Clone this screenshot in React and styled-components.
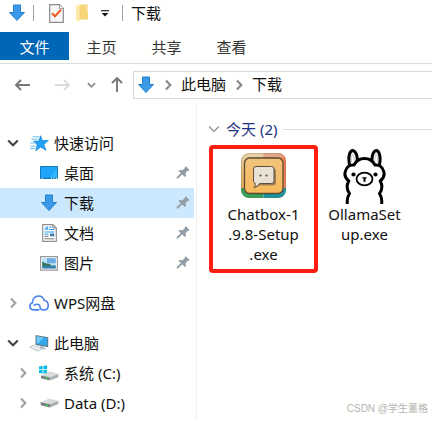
import React, { useState } from 'react';
import styled, { createGlobalStyle } from 'styled-components';

const GlobalStyle = createGlobalStyle`
    * {
        box-sizing: border-box;
    }

    body {
        margin: 0;
        background: #fffffd;
        color: #111;
        font-family: "Noto Sans", "Noto Sans CJK SC", sans-serif;
        font-size: 15px;
        line-height: 20px;
        overflow: hidden;
    }

    button {
        border: 0;
        padding: 0;
        background: none;
        color: inherit;
        font: inherit;
        cursor: pointer;
    }

    svg {
        display: block;
        flex: none;
    }
`;

const Window = styled.div`
    display: flex;
    flex-direction: column;
    min-height: 100vh;
    position: relative;
`;

const TitleBar = styled.header`
    display: flex;
    align-items: center;
    height: 26px;
    margin-bottom: 6px;
    padding-left: 8px;
`;

const QuickTools = styled.div`
    display: flex;
    align-items: center;
    gap: 12px;
    margin: 0 13px 0 15px;
`;

const Separator = styled.span`
    width: 1px;
    height: 16px;
    background: #a0a0a0;
`;

const ToolIcon = styled.span`
    display: flex;
    margin-right: ${props => props.$gap}px;
`;

const WindowTitle = styled.h1`
    margin: 0 0 0 8px;
    font-size: 15px;
    font-weight: 400;
`;

const Ribbon = styled.nav`
    display: flex;
    height: 32px;
    padding-bottom: 4px;
    border-bottom: 1px solid #dadada;
`;

const RibbonTab = styled.button`
    width: ${props => props.$primary ? '69px' : '65px'};
    height: 28px;
    padding-top: 1px;
    background: ${props => props.$primary ? '#0067b8' : 'transparent'};
    color: ${props => props.$primary ? '#fff' : '#333'};
`;

const NavBar = styled.div`
    display: flex;
    align-items: center;
    padding: 7px 0 6px 14px;
`;

const NavButton = styled.button`
    display: flex;
    justify-content: center;
    width: 18px;
    margin-right: ${props => props.$gap}px;
`;

const AddressBar = styled.div`
    display: flex;
    align-items: center;
    flex: 1;
    height: 28px;
    padding-left: 3px;
    border: 1px solid #d9d9d9;
    border-right: 0;
`;

const Crumb = styled.a`
    padding: 0 10px 2px 9px;
    color: inherit;
    text-decoration: none;
`;

const Body = styled.div`
    display: flex;
    flex: 1;
`;

const Sidebar = styled.aside`
    width: 197px;
    padding: 23px 2px 0 0;
    border-right: 1px solid #f0f0f0;
`;

const TreeGroup = styled.div`
    & + & {
        margin-top: 10px;
    }
`;

const TreeRow = styled.button`
    display: flex;
    align-items: center;
    width: 100%;
    height: 30px;
    padding-left: ${props => props.$child ? '16px' : '6px'};
    padding-right: 4px;
    background: ${props => props.$selected ? '#cce8ff' : 'transparent'};
    text-align: left;
`;

const ExpandSlot = styled.span`
    display: flex;
    justify-content: center;
    width: 14px;
`;

const IconSlot = styled.span`
    display: flex;
    justify-content: center;
    width: 20px;
    margin: 0 5px 0 9px;
`;

const TreeLabel = styled.span`
    flex: 1;
    padding-bottom: 1px;
`;

const FileArea = styled.main`
    flex: 1;
    min-width: 0;
    padding: 14px 0 0 11px;
`;

const GroupHeader = styled.h2`
    display: flex;
    align-items: center;
    gap: 6px;
    margin: 0 0 6px;
    color: #1e3287;
    font-size: 15px;
    font-weight: 400;
    white-space: nowrap;

    &::after {
        content: '';
        flex: 1;
        height: 1px;
        background: #dedede;
    }
`;

const FileGrid = styled.div`
    display: flex;
    align-items: flex-start;
    padding-left: 1px;
`;

const FileTile = styled.button`
    display: flex;
    flex-direction: column;
    align-items: center;
    width: ${props => props.$marked ? '109px' : '93px'};
    padding-bottom: 5px;
    border: ${props => props.$marked ? '4px solid #ff1d12' : '0'};
    border-top: 4px solid ${props => props.$marked ? '#ff1d12' : 'transparent'};
    border-radius: 4px;
`;

const FileName = styled.span`
    white-space: pre-line;
`;

const Watermark = styled.small`
    position: absolute;
    right: 4px;
    bottom: 5px;
    color: #b4b4b4;
    font-family: "Liberation Sans", "Noto Sans CJK SC", sans-serif;
    font-size: 10px;
    line-height: 14px;
`;

const DownloadIcon = () => (
    <svg width="18" height="18" viewBox="0 0 18 18">
        <path d="M5.5 1h7v7.5h4L9 16.5l-7.5-8h4z" fill="#3c99e7" stroke="#2180d0" />
    </svg>
);

const Chevron = ({ down, color = '#8a8a8a', thin, small }) => (
    <svg
        width={small ? 9 : down ? 12 : 7}
        height={small ? 6 : down ? 8 : 12}
        viewBox={down ? '0 0 12 8' : '0 0 7 12'}
    >
        <path
            d={down ? 'M1.2 1.5 6 6.3l4.8-4.8' : 'M1 1.5 5.3 6 1 10.5'}
            fill="none"
            stroke={color}
            strokeWidth={thin ? 1.2 : 2.2}
        />
    </svg>
);

const CheckPageIcon = () => (
    <svg width="15" height="19" viewBox="0 0 15 19">
        <path d="M.7.7h9.8l3.8 3.8v13.8H.7z" fill="#f7f7f7" stroke="#8b8b8b" strokeWidth="1.2" />
        <path d="M10.5.7v3.8h3.8" fill="#fff" stroke="#999" />
        <path d="m3 9.2 3 3.1 6-6.5" fill="none" stroke="#f05a1a" strokeWidth="2" />
    </svg>
);

const FolderIcon = () => (
    <svg width="13" height="18" viewBox="0 0 13 18">
        <path d="M3 .5h9v15H3z" fill="#f7d67a" />
        <path d="M0 .5 4 2.5V16l-2 1.5-2-1.5z" fill="#ffe9a9" />
        <path d="M4 2.5V16" stroke="#efca6b" strokeWidth=".6" />
        <path d="M10 .5h2v7h-2z" fill="#fae5a6" />
    </svg>
);

const CustomizeIcon = () => (
    <svg width="8" height="7" viewBox="0 0 8 7">
        <path d="M0 .7h8" stroke="#222" strokeWidth="1.2" />
        <path d="M.7 3h6.6L4 6.5z" fill="#111" />
    </svg>
);

const ArrowIcon = ({ color, turn = 0 }) => (
    <svg width="18" height="18" viewBox="0 0 18 18">
        <g transform={`rotate(${turn} 9 9)`} fill="none" stroke={color} strokeWidth="1.9">
            <path d="M16 9H2.5M7 4 2 9l5 5" />
        </g>
    </svg>
);

const StarIcon = () => (
    <svg width="19" height="17" viewBox="0 0 19 17">
        <path d="m10.6.8 1.8 4.8 6-.2-4.6 4 2.2 5.9-5.3-3.2-5 3.6 1.5-5.9-3.6-3.5 5.2-.3z" fill="#20a2f5" stroke="#1283d8" strokeWidth=".7" />
        <path d="M2.5 1.8h6.8M1.4 4.2h6.4M.3 8h4.2M.7 11.1h5M0 13.6h4.8" stroke="#57b9ef" strokeWidth=".9" />
    </svg>
);

const DesktopIcon = () => (
    <svg width="18" height="14" viewBox="0 0 18 14">
        <path d="M.5.5h17v12H.5z" fill="#1da5fa" stroke="#137abc" />
        <path d="m10 12 7-9v9z" fill="#35b5ff" />
        <path d="M1 12.3h16" stroke="#0872b9" />
        <path d="M2 12.3h1M11 12.3h1M13.5 12.3h1M16 12.3h1" stroke="#fff" />
    </svg>
);

const DocumentIcon = () => (
    <svg width="15" height="18" viewBox="0 0 15 18">
        <path d="M.7.7h10.1L14.3 4v13.3H.7z" fill="#fff" stroke="#909090" strokeWidth="1.2" />
        <path d="M10.8.7V4h3.5" fill="none" stroke="#909090" />
        <path d="m2.5 6 2-3h1.2v3M3.5 5h2.2M7.2 3.2h2.3M7.2 5.5h5M2.5 8h9.8M2.5 10.2h4" fill="none" stroke="#279be5" />
        <path d="M8 9.5h4.3v2.8H8z" fill="#397caf" />
        <path d="M2.5 12.3h4M2.5 14.8h9.8" stroke="#777" />
    </svg>
);

const PictureIcon = () => (
    <svg width="18" height="15" viewBox="0 0 18 15">
        <path d="M.6.6h16.8v13.5H.6z" fill="#fff" stroke="#999" strokeWidth="1.2" />
        <path d="M2.2 2.2h13.6v10.3H2.2z" fill="#b9e1fc" />
        <path d="M7 2.2h8.8v5H7z" fill="#6daee2" />
        <path d="m2.2 5.5 4 2 3 .2 2.4 1.8h4.2v1H2.2z" fill="#35765f" />
        <path d="M2.2 10h13.6v2.5H2.2z" fill="#357fae" />
    </svg>
);

const CloudIcon = () => (
    <svg width="20" height="16" viewBox="0 0 20 16">
        <path
            d="M9.8 14.9H4.2C-.1 14.5-.2 9 3.5 7.8 3.2 3.5 6.3 1 9.5 1c2.8 0 5 1.8 5.6 4.3 5.5 1 5.2 8.9.7 9.6-2.6.3-4.8-.4-4.8-2.9 0-1.5-1.1-2.8-3-2.8-1.1 0-2 .4-2.7 1"
            fill="none"
            stroke="#4b82ed"
            strokeWidth="1.6"
            strokeLinecap="round"
        />
    </svg>
);

const ComputerIcon = () => (
    <svg width="20" height="18" viewBox="0 0 20 18">
        <path d="m6.5 1 12.7 2.2v10L6.5 11z" fill="#647989" />
        <path d="m7.5 2.2 10.7 1.9v7.7L7.5 9.9z" fill="#35a9ed" />
        <path d="m7.5 2.2 7 1.2L8 10z" fill="#75c9f7" />
        <path d="m11.5 12 3 .5v1.2l3 .8-2 1-5-1.5z" fill="#a9b4bb" />
        <path d="m.5 13.2 4-2 9 3.6-4.7 2.5z" fill="#d8dfe3" stroke="#adb8bf" strokeWidth=".6" />
        <path d="m3 13 6.5 2.7M5 12.2l6 2.7" stroke="#fff" strokeWidth=".7" />
    </svg>
);

const SystemDriveIcon = () => (
    <svg width="20" height="16" viewBox="0 0 20 16">
        <path d="M0 1.5 3.6 1v3.3H0zM4.4.9 8 .3v4H4.4zM0 5.1h3.6v3.3L0 7.9zM4.4 5.1H8V9l-3.6-.5z" fill="#08bce9" />
        <path d="m2 10.5 8.5-4.3L19.3 9l-8.6 3.3z" fill="#d8dcdd" />
        <path d="m2 10.5 8.7 1.8v3.2L2 13.2z" fill="#777d80" />
        <path d="M10.7 12.3 19.3 9v3.3l-8.6 3.2z" fill="#a9aeb0" />
        <path d="m6.5 12.8 2.3.6" stroke="#32d442" strokeWidth="1.4" />
    </svg>
);

const DriveIcon = () => (
    <svg width="19" height="10" viewBox="0 0 19 10">
        <path d="M.7 4.2 9.2.6l9.2 2.2L10 6.2z" fill="#d8dcdd" />
        <path d="M.7 4.2 10 6.2v3.2L.7 7.2z" fill="#777d80" />
        <path d="m10 6.2 8.4-3.4v3.3L10 9.4z" fill="#a9aeb0" />
        <path d="m6 6.9 2.3.6" stroke="#32d442" strokeWidth="1.4" />
    </svg>
);

const PinIcon = () => (
    <svg width="14" height="14" viewBox="0 0 14 14">
        <path d="m8.8 1 1-.8 3.7 3.7-1 1-.8-.1-2.2 2.4.5 2.7-1 1-2.8-2.4L2 12.4H.7V11L4.8 7.3 2.5 4.8l1-.9 2.9.3 2.5-2.3z" fill="#929da5" />
    </svg>
);

const ChatboxIcon = () => (
    <svg width="46" height="55" viewBox="0 -1 46 55">
        <defs>
            <clipPath id="chatboxFrame">
                <rect x="0" y="3" width="45" height="45" rx="8" />
            </clipPath>
            <linearGradient id="chatboxTop" x2="0" y2="1">
                <stop stopColor="#e4d3aa" />
                <stop offset="1" stopColor="#e9aa50" />
            </linearGradient>
            <linearGradient id="chatboxFace" x2="0" y2="1">
                <stop stopColor="#f0c47d" />
                <stop offset="1" stopColor="#f9b95c" />
            </linearGradient>
        </defs>
        <g clipPath="url(#chatboxFrame)">
            <path d="M0 3h22.5v35H0z" fill="url(#chatboxTop)" />
            <path d="M22.5 3H45v35H22.5z" fill="#f08156" />
            <path d="M22.5 3H45v4H22.5z" fill="#e2a689" />
            <path d="M0 38h22.5v11H0z" fill="#35a25b" />
            <path d="M22.5 38H45v11H22.5z" fill="#1994a0" />
        </g>
        <rect x=".5" y="3.5" width="44" height="44" rx="8" fill="none" stroke="#7e674f" strokeOpacity=".3" />
        <rect x="3.5" y="8" width="38.5" height="35.5" rx="5" fill="url(#chatboxFace)" stroke="#5d492f" strokeWidth="1.3" />
        <path d="M16 18.5h16q3 0 3 3v11q0 3-4 3H19l-6 3 2-4q-2-1-2-3V21.5q0-3 3-3" fill="#665542" opacity=".6" />
        <path d="M15 16.5h15.5q2.5 0 2.5 2.5v12q0 2.5-2.5 2.5H18.5c-1 2-3 3.4-5.6 3.8 1.2-1 1.7-2.4 1.3-4-1.2-.4-1.7-1-1.7-2.3V19q0-2.5 2.5-2.5z" fill="#e9e1d3" stroke="#5d5042" />
        <circle cx="19.5" cy="25.5" r="1.1" fill="#574b40" />
        <circle cx="25.5" cy="25.5" r="1.1" fill="#574b40" />
    </svg>
);

const LlamaIcon = () => (
    <svg width="44" height="55" viewBox="0 0 44 55">
        <g fill="#fff" stroke="#000" strokeWidth="3" strokeLinejoin="round">
            <path d="M6.5 16C5 8 6.5 2 9.5 1.5c3.5.5 5.5 6 4.5 12M29 13.5c-.5-6 1-11.5 4.5-12 3 .5 4.5 7 3 14.5" />
            <path d="M4.5 56c-.8-4.5-.2-8 2-11.5C4 41 3.2 36.5 5.8 32 2.5 29.5 1.2 25.5 2.5 22c1-4 4.5-6.5 8.5-6 2-4 6-6.5 10.5-6.5S30 12 32 16c4-.5 7.5 2 8.5 6 1.3 3.5 0 7.5-3.3 10 2.6 4.5 1.8 9-.7 12.5 2.2 3.5 2.8 7 2 11.5" />
        </g>
        <path d="M8.5 13.5c-.3-4 .1-7 1.3-8.2 1.2 1.8 1.6 4.3 1.2 7M32 12.5c-.4-3 0-5.5 1.2-7.2 1.2 1.2 1.6 4.2 1.3 8.2" fill="#fff" stroke="#aaa" strokeWidth=".6" />
        <ellipse cx="21.5" cy="30" rx="8" ry="6.3" fill="#fff" stroke="#000" strokeWidth="1.8" />
        <circle cx="10.5" cy="25.5" r="2.1" />
        <circle cx="32.5" cy="25.5" r="2.1" />
        <path d="M19.5 28.5h4l-1.3 1.8v2.3h-1.4v-2.3z" stroke="#000" strokeWidth=".5" />
    </svg>
);

const ribbonTabs = ['文件', '主页', '共享', '查看'];

const tree = [
    [
        { label: '快速访问', icon: <StarIcon />, open: true },
        { label: '桌面', icon: <DesktopIcon />, child: true, pinned: true },
        { label: '下载', icon: <DownloadIcon />, child: true, pinned: true },
        { label: '文档', icon: <DocumentIcon />, child: true, pinned: true },
        { label: '图片', icon: <PictureIcon />, child: true, pinned: true },
    ],
    [
        { label: 'WPS网盘', icon: <CloudIcon />, open: false },
    ],
    [
        { label: '此电脑', icon: <ComputerIcon />, open: true },
        { label: '系统 (C:)', icon: <SystemDriveIcon />, child: true, open: false },
        { label: 'Data (D:)', icon: <DriveIcon />, child: true, open: false },
    ],
];

const files = [
    { name: 'Chatbox-1\n.9.8-Setup\n.exe', icon: <ChatboxIcon />, marked: true },
    { name: 'OllamaSet\nup.exe', icon: <LlamaIcon /> },
];

const App = () => {
    const [selected, setSelected] = useState('下载');

    return (
        <Window>
            <GlobalStyle />
            <TitleBar>
                <ToolIcon $gap={7}><DownloadIcon /></ToolIcon>
                <Separator />
                <QuickTools>
                    <CheckPageIcon />
                    <FolderIcon />
                    <CustomizeIcon />
                </QuickTools>
                <Separator />
                <WindowTitle>下载</WindowTitle>
            </TitleBar>

            <Ribbon>
                {ribbonTabs.map((tab, i) => (
                    <RibbonTab key={tab} $primary={i === 0}>{tab}</RibbonTab>
                ))}
            </Ribbon>

            <NavBar>
                <NavButton $gap={21} aria-label="后退"><ArrowIcon color="#777" /></NavButton>
                <NavButton $gap={11} aria-label="前进"><ArrowIcon color="#dcdcdc" turn={180} /></NavButton>
                <NavButton $gap={8} aria-label="最近浏览的位置"><Chevron down small /></NavButton>
                <NavButton $gap={7} aria-label="上移"><ArrowIcon color="#777" turn={90} /></NavButton>
                <AddressBar>
                    <ToolIcon $gap={10}><DownloadIcon /></ToolIcon>
                    <Chevron />
                    <Crumb href="#pc">此电脑</Crumb>
                    <Chevron />
                    <Crumb href="#downloads">下载</Crumb>
                </AddressBar>
            </NavBar>

            <Body>
                <Sidebar>
                    {tree.map(group => (
                        <TreeGroup key={group[0].label}>
                            {group.map(item => (
                                <TreeRow
                                    key={item.label}
                                    $child={item.child}
                                    $selected={item.label === selected}
                                    onClick={() => setSelected(item.label)}
                                >
                                    <ExpandSlot>
                                        {item.open !== undefined && (
                                            <Chevron down={item.open} color={item.open ? '#444' : '#a2a2a2'} />
                                        )}
                                    </ExpandSlot>
                                    <IconSlot>{item.icon}</IconSlot>
                                    <TreeLabel>{item.label}</TreeLabel>
                                    {item.pinned && <PinIcon />}
                                </TreeRow>
                            ))}
                        </TreeGroup>
                    ))}
                </Sidebar>

                <FileArea>
                    <GroupHeader>
                        <Chevron down thin />
                        今天 (2)
                    </GroupHeader>
                    <FileGrid>
                        {files.map(file => (
                            <FileTile key={file.name} $marked={file.marked}>
                                {file.icon}
                                <FileName>{file.name}</FileName>
                            </FileTile>
                        ))}
                    </FileGrid>
                </FileArea>
            </Body>
            <Watermark>CSDN @学生董格</Watermark>
        </Window>
    );
};

export default App;
